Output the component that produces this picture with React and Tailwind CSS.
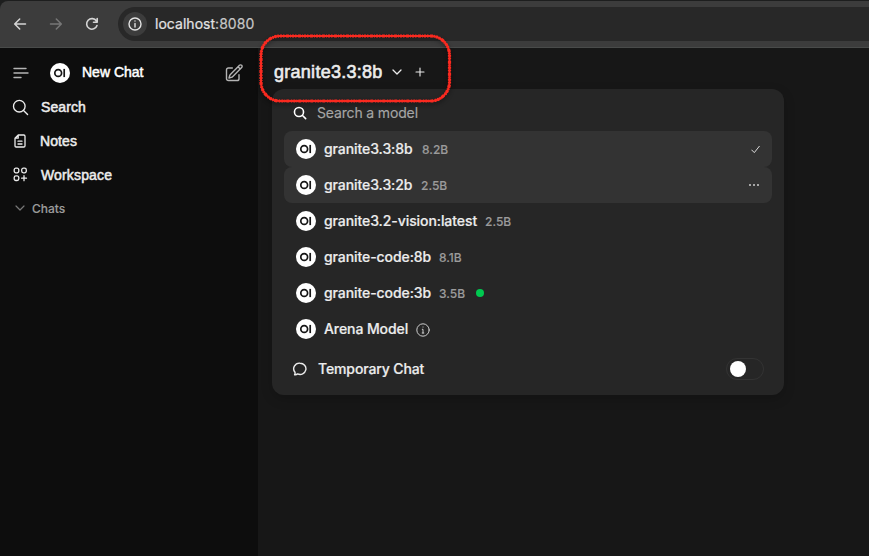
import React from "react";

const models = [
  { name: "granite3.3:8b", size: "8.2B", width: "w-[90px]", state: "selected" },
  { name: "granite3.3:2b", size: "2.5B", width: "w-[89px]", state: "hover" },
  { name: "granite3.2-vision:latest", size: "2.5B", width: "w-[153px]" },
  { name: "granite-code:8b", size: "8.1B", width: "w-[107px]" },
  { name: "granite-code:3b", size: "3.5B", width: "w-[107px]", online: true },
  { name: "Arena Model", width: "w-[84px]", info: true },
];

function Icon({ children, className = "", stroke = 1.5, box = "0 0 24 24" }) {
  return (
    <svg viewBox={box} fill="none" stroke="currentColor" strokeWidth={stroke} strokeLinecap="round" strokeLinejoin="round" className={`shrink-0 ${className}`}>
      {children}
    </svg>
  );
}

function Logo() {
  return (
    <svg viewBox="0 0 20 20" className="size-5 shrink-0">
      <circle cx="10" cy="10" r="10" fill="#fff" />
      <circle cx="8.2" cy="10" r="3.4" fill="none" stroke="#171717" strokeWidth="1.7" />
      <path d="M14.2 5.9V14.1" stroke="#171717" strokeWidth="1.7" />
    </svg>
  );
}

function BrowserBar() {
  return (
    <div className="h-12 shrink-0 bg-[#1d1e1e] pt-px">
      <div className="flex h-[47px] items-center rounded-tl-lg border-b border-[#494b4a] bg-[#3c3c3c] pl-[13px]">
        <Icon className="mr-[22px] size-[14px] text-[#d5d5d5]" box="0 0 14 14" stroke={1.5}>
          <path d="M12.5 7H2M6.7 2L1.7 7L6.7 12" />
        </Icon>
        <Icon className="mr-[22px] size-[14px] text-[#777]" box="0 0 14 14" stroke={1.5}>
          <path d="M1.5 7H12M7.3 2L12.3 7L7.3 12" />
        </Icon>
        <Icon className="mr-[19px] size-[14px] text-[#d5d5d5]" box="0 0 14 14" stroke={1.6}>
          <path d="M12 8.5A5.3 5.3 0 1 1 11.4 4M12.2 1.5V5.2H8.5" />
        </Icon>
        <div className="mb-px flex h-[34px] flex-1 items-center rounded-l-full bg-[#282828] pl-[5px]">
          <div className="mr-2 flex size-6 items-center justify-center rounded-full bg-[#3c3c3c] text-[#e3e3e3]">
            <Icon className="size-[14px]" box="0 0 14 14" stroke={1.4}>
              <circle cx="7" cy="7" r="6" />
              <path d="M7 6.5V10M7 4V4.1" />
            </Icon>
          </div>
          <div className="font-['Inter',sans-serif] text-[14px] leading-5 tracking-[0.03px] text-[#e3e3e3] [-webkit-text-stroke:0.2px_currentColor]">
            localhost<span className="text-[#c7c7c7]">:8080</span>
          </div>
        </div>
      </div>
    </div>
  );
}

function Sidebar() {
  return (
    <aside className="w-[258px] shrink-0 bg-[#0d0d0d] pt-2 font-['Liberation_Sans',sans-serif] text-[14px] leading-5 text-[#ececec] [-webkit-text-stroke:0.5px_currentColor]">
      <div className="flex h-[34px] items-center pl-[13px]">
        <Icon className="mr-[21px] size-4 text-[#b4b4b4]" box="0 0 16 16" stroke={1.4}>
          <path d="M1 3.5H13M1 8H15M1 12.5H8" />
        </Icon>
        <Logo />
        <span className="ml-3 flex-1 pb-0.5 text-white">New Chat</span>
        <Icon className="mr-[14px] size-5 text-[#b4b4b4]" stroke={1.7}>
          <path d="m16.862 4.487 1.687-1.688a1.875 1.875 0 1 1 2.652 2.652L10.582 16.07a4.5 4.5 0 0 1-1.897 1.13L6 18l.8-2.685a4.5 4.5 0 0 1 1.13-1.897l8.932-8.931Zm0 0L19.5 7.125M18 14v4.75A2.25 2.25 0 0 1 15.75 21H5.25A2.25 2.25 0 0 1 3 18.75V8.25A2.25 2.25 0 0 1 5.25 6H10" />
        </Icon>
      </div>
      <div className="flex h-[34px] items-center pl-3">
        <Icon className="mr-3 size-[17px]" stroke={1.9}>
          <path d="m22 22-5.7-5.7M18.5 10.2a8.2 8.2 0 1 1-16.4 0 8.2 8.2 0 0 1 16.4 0Z" />
        </Icon>
        <span className="tracking-[0.1px]">Search</span>
      </div>
      <div className="flex h-[34px] items-center pl-[14px]">
        <Icon className="mr-[14px] h-[14px] w-3" box="0 0 12 14" stroke={1.3}>
          <path d="M4.2 1H9.8Q11 1 11 2.2V11.8Q11 13 9.8 13H2.2Q1 13 1 11.8V4.2L4.2 1V4.2H1M4 7.2H8M4 10H8" />
        </Icon>
        <span className="tracking-[0.1px]">Notes</span>
      </div>
      <div className="flex h-[34px] items-center pl-[13px]">
        <Icon className="mb-0.5 mr-[13px] size-[15px]" box="0 0 15 15" stroke={1.3}>
          <rect x="1.2" y="1.2" width="4.6" height="4.6" rx="1.7" />
          <rect x="8.7" y="1.2" width="4.6" height="4.6" rx="1.7" />
          <rect x="1.2" y="8.9" width="4.6" height="4.6" rx="1.7" />
          <path d="M11 8.7V13.7M8.6 11.2H13.5" />
        </Icon>
        <span className="tracking-[0.15px]">Workspace</span>
      </div>
      <div className="flex h-[33px] items-center pl-[15px] font-['Inter',sans-serif] text-[12px] font-medium text-[#9b9b9b] [-webkit-text-stroke:0]">
        <Icon className="mb-0.5 mr-[7px] size-[10px] text-[#777]" box="0 0 10 10" stroke={1.2}>
          <path d="M1 3L5 7L9 3" />
        </Icon>
        <span className="[-webkit-text-stroke:0.15px_currentColor]">Chats</span>
      </div>
    </aside>
  );
}

function ModelRow({ model }) {
  return (
    <div className={`flex h-9 items-center rounded-lg pl-3 pr-3 ${model.state ? "bg-[#333]" : ""}`}>
      <Logo />
      <span className={`mb-px ml-2 whitespace-nowrap text-[14px] font-medium leading-5 tracking-[-0.08px] text-[#ececec] [-webkit-text-stroke:0.2px_currentColor] ${model.width}`}>{model.name}</span>
      {model.size && <span className="ml-2 mt-px text-[12px] font-medium leading-4 text-[#9b9b9b] [-webkit-text-stroke:0.15px_currentColor]">{model.size}</span>}
      {model.online && <span className="ml-[11px] size-2 rounded-full bg-[#00c950]" />}
      {model.info && (
        <Icon className="ml-2 mt-0.5 size-[14px] text-[#cdcdcd]" box="0 0 14 14" stroke={1}>
          <circle cx="7" cy="7" r="6.2" />
          <path d="M6.3 6.3H7V10M6.2 10H7.8M7 4V4.1" />
        </Icon>
      )}
      {model.state === "selected" && (
        <Icon className="ml-auto size-[9px] text-[#dcdcdc]" box="0 0 9 9" stroke={1}>
          <path d="M.7 5L3.3 7.6L8.3 1.3" />
        </Icon>
      )}
      {model.state === "hover" && (
        <span className="ml-auto mr-px flex gap-0.5">
          <i className="size-0.5 bg-[#a5a5a5]" />
          <i className="size-0.5 bg-[#a5a5a5]" />
          <i className="size-0.5 bg-[#a5a5a5]" />
        </span>
      )}
    </div>
  );
}

function ModelMenu() {
  return (
    <div className="ml-[14px] flex h-[306px] w-[512px] flex-col rounded-xl bg-[#262626] px-3 font-['Inter',sans-serif] shadow-[0_4px_12px_rgba(0,0,0,0.18)]">
      <div className="flex h-[42px] items-start pl-2 pt-[14px]">
        <Icon className="mr-[9px] mt-0.5 size-4 text-white" stroke={2.4}>
          <path d="m20.5 20.5-4.7-4.7M17.3 10.5a6.8 6.8 0 1 1-13.6 0 6.8 6.8 0 0 1 13.6 0Z" />
        </Icon>
        <span className="text-[14px] leading-5 tracking-[-0.15px] text-[#a5a5a5] [-webkit-text-stroke:0.15px_currentColor]">Search a model</span>
      </div>
      {models.map((model) => (
        <ModelRow key={model.name} model={model} />
      ))}
      <div className="flex h-11 items-center pl-2 pr-2">
        <Icon className="mr-[10px] size-4 text-[#ececec]" box="0 0 16 16" stroke={1.4}>
          <path d="M8 2.2a5.9 5.6 0 1 1-2.4 10.7Q4.2 14 2.6 13.7Q3.3 12.6 3 11.3A5.8 5.6 0 0 1 8 2.2Z" />
        </Icon>
        <span className="mb-px flex-1 text-[14px] font-medium leading-5 tracking-[-0.12px] text-[#ececec] [-webkit-text-stroke:0.2px_currentColor]">Temporary Chat</span>
        <div className="flex h-[22px] w-[38px] items-center rounded-full border border-[#333] pl-[3px]">
          <div className="size-4 rounded-full bg-white" />
        </div>
      </div>
    </div>
  );
}

export default function App() {
  return (
    <div className="relative flex h-[556px] w-[869px] flex-col overflow-hidden bg-[#171717]">
      <BrowserBar />
      <div className="flex flex-1">
        <Sidebar />
        <main className="flex-1">
          <div className="flex h-[41px] items-center pl-4 pt-1.5 text-[#ececec]">
            <h1 className="w-[109px] whitespace-nowrap font-['Liberation_Sans',sans-serif] text-[18px] leading-6 tracking-[0.27px] [-webkit-text-stroke:0.6px_currentColor]">granite3.3:8b</h1>
            <Icon className="ml-[9px] size-[10px]" box="0 0 10 10" stroke={1.3}>
              <path d="M1 3L5 7L9 3" />
            </Icon>
            <Icon className="ml-[13px] size-[10px]" box="0 0 10 10" stroke={1.1}>
              <path d="M5 1V9M1 5H9" />
            </Icon>
          </div>
          <ModelMenu />
        </main>
      </div>
      {/* Hand-drawn highlight around the model selector */}
      <svg viewBox="0 0 200 76" className="pointer-events-none absolute left-[255px] top-[30px] h-[76px] w-[200px] drop-shadow-[0_2px_2px_rgba(0,0,0,0.4)]" fill="none" stroke="#fa2a20">
        <rect x="6" y="6" width="188.5" height="65" rx="19" strokeWidth="2.1" />
        <rect x="6" y="6" width="188.5" height="65" rx="19" strokeWidth="3.2" strokeDasharray="2 1 1.5 1.5 3 1 1 1" />
      </svg>
    </div>
  );
}
